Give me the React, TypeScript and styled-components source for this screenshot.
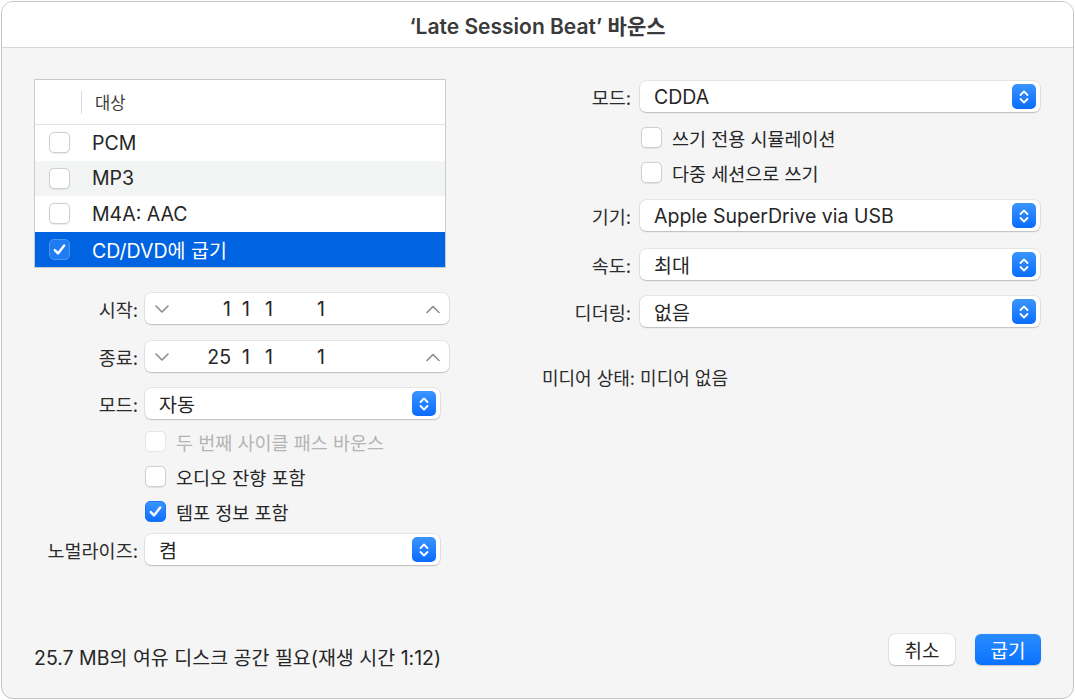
import styled, { createGlobalStyle } from "styled-components";

const GlobalStyle = createGlobalStyle`
  html, body {
    margin: 0;
    padding: 0;
    background: #ffffff;
  }
  body {
    font-family: Inter, "Noto Sans CJK KR", sans-serif;
    color: #262626;
  }
`;

//# 창
const Window = styled.div`
  box-sizing: border-box;
  margin: 1px;
  width: 1073px;
  height: 698px;
  border: 1px solid #c4c4c4;
  border-radius: 12px;
  background: #f5f5f5;
  overflow: hidden;
  display: flex;
  flex-direction: column;
`;

const TitleBar = styled.div`
  height: 45px;
  flex: none;
  background: #ffffff;
  border-bottom: 1px solid #d8d8d8;
  display: flex;
  align-items: center;
  justify-content: center;
  font-size: 21px;
  font-weight: 600;
  color: #3a3a3a;
`;

const Body = styled.div`
  flex: 1;
  display: flex;
  flex-direction: column;
  padding: 31px 32px 27px 32px;
`;

const Columns = styled.div`
  flex: 1;
  display: flex;
  gap: 91px;
`;

const LeftColumn = styled.div`
  width: 416px;
  display: flex;
  flex-direction: column;
`;

const RightColumn = styled.div`
  width: 500px;
  display: flex;
  flex-direction: column;
`;

//# 대상 표
const Table = styled.div`
  width: 410px;
  border: 1px solid #cacaca;
  background: #ffffff;
`;

const TableHeader = styled.div`
  height: 44px;
  display: flex;
  align-items: center;
  border-bottom: 1px solid #e2e2e2;
  font-size: 16.5px;
  color: #3a3a3a;
`;

const HeaderDivider = styled.div`
  width: 1px;
  height: 23px;
  margin-left: 46px;
  margin-right: 13px;
  background: #dcdcdc;
`;

const TableRow = styled.div<{ $selected?: boolean; $alt?: boolean }>`
  height: 35.5px;
  display: flex;
  align-items: center;
  padding-left: 14px;
  gap: 22px;
  font-size: 19.5px;
  background: ${({ $selected, $alt }) =>
    $selected ? "#0063e1" : $alt ? "#f3f4f4" : "#ffffff"};
  color: ${({ $selected }) => ($selected ? "#ffffff" : "#262626")};
`;

//# 체크박스
const Box = styled.div<{ $checked?: boolean; $disabled?: boolean; $onBlue?: boolean }>`
  box-sizing: border-box;
  width: 21px;
  height: 21px;
  flex: none;
  border-radius: 5px;
  display: flex;
  align-items: center;
  justify-content: center;
  background: ${({ $checked, $onBlue }) =>
    $checked
      ? $onBlue
        ? "#1f7cf3"
        : "linear-gradient(#3b95ff, #0a6fff)"
      : "#ffffff"};
  border: 1px solid
    ${({ $checked, $disabled, $onBlue }) =>
      $onBlue
        ? "#4d95f0"
        : $checked
        ? "#1b76f5"
        : $disabled
        ? "#e6e6e6"
        : "#cfcfcf"};
  box-shadow: ${({ $disabled, $checked }) =>
    $disabled || $checked ? "none" : "0 0.5px 1px rgba(0,0,0,0.08)"};
`;

function CheckBox(props: { checked?: boolean; disabled?: boolean; onBlue?: boolean }) {
  return (
    <Box $checked={props.checked} $disabled={props.disabled} $onBlue={props.onBlue}>
      {props.checked && (
        <svg width="15" height="15" viewBox="0 0 16 16">
          <path
            d="M3 8.6 L6.4 12.2 L13 3.8"
            fill="none"
            stroke="#ffffff"
            strokeWidth="2.6"
            strokeLinecap="round"
            strokeLinejoin="round"
          />
        </svg>
      )}
    </Box>
  );
}

const CheckRow = styled.div<{ $disabled?: boolean; $indent: number }>`
  height: 35px;
  display: flex;
  align-items: center;
  gap: 10px;
  padding-left: ${({ $indent }) => $indent}px;
  font-size: 18.5px;
  color: ${({ $disabled }) => ($disabled ? "#b4b4b4" : "#262626")};
`;

//# 폼 행
const FormRow = styled.div<{ $labelWidth: number; $top: number; $gap: number }>`
  display: grid;
  grid-template-columns: ${({ $labelWidth }) => $labelWidth}px 1fr;
  column-gap: ${({ $gap }) => $gap}px;
  align-items: center;
  margin-top: ${({ $top }) => $top}px;
`;

const Label = styled.div`
  text-align: right;
  font-size: 18.5px;
  color: #2b2b2b;
  white-space: nowrap;
`;

const Field = styled.div<{ $width: number }>`
  box-sizing: border-box;
  width: ${({ $width }) => $width}px;
  height: 31px;
  background: #ffffff;
  border-radius: 6px;
  box-shadow: 0 0 0 0.5px rgba(0, 0, 0, 0.12), 0 1px 1.5px rgba(0, 0, 0, 0.18);
  display: flex;
  align-items: center;
  font-size: 19.5px;
  color: #262626;
`;

const PopupText = styled.div`
  flex: 1;
  padding-left: 14px;
`;

const PopupButton = styled.div`
  width: 24px;
  height: 25px;
  margin-right: 4px;
  border-radius: 5px;
  background: linear-gradient(#3b95ff, #0a6cff);
  display: flex;
  align-items: center;
  justify-content: center;
`;

function Popup(props: { width: number; value: string }) {
  return (
    <Field $width={props.width}>
      <PopupText>{props.value}</PopupText>
      <PopupButton>
        <svg width="14" height="18" viewBox="0 0 14 18">
          <path
            d="M3.5 7 L7 3.5 L10.5 7 M3.5 11 L7 14.5 L10.5 11"
            fill="none"
            stroke="#ffffff"
            strokeWidth="1.8"
            strokeLinecap="round"
            strokeLinejoin="round"
          />
        </svg>
      </PopupButton>
    </Field>
  );
}

//# 위치 스테퍼
const Stepper = styled(Field)`
  padding: 0 8px 0 9px;
`;

const Numbers = styled.div`
  flex: 1;
  display: flex;
  padding-left: 28px;
`;

const Num = styled.span<{ $w: number }>`
  width: ${({ $w }) => $w}px;
  text-align: right;
  font-size: 19.5px;
`;

function Chevron(props: { up?: boolean }) {
  return (
    <svg width="16" height="10" viewBox="0 0 16 10">
      <path
        d={props.up ? "M2 8.5 L8 2.5 L14 8.5" : "M2 2 L8 8 L14 2"}
        fill="none"
        stroke="#8c8c8c"
        strokeWidth="1.6"
        strokeLinecap="round"
        strokeLinejoin="round"
      />
    </svg>
  );
}

function Position(props: { bar: string }) {
  return (
    <Stepper $width={304}>
      <Chevron />
      <Numbers>
        <Num $w={33}>{props.bar}</Num>
        <Num $w={19}>1</Num>
        <Num $w={23}>1</Num>
        <Num $w={52}>1</Num>
      </Numbers>
      <Chevron up />
    </Stepper>
  );
}

const StatusText = styled.div`
  margin-top: 37px;
  font-size: 18px;
  color: #2b2b2b;
  padding-left: 1px;
`;

//# 하단
const Footer = styled.div`
  display: flex;
  align-items: center;
  justify-content: space-between;
`;

const FooterText = styled.div`
  font-size: 19.5px;
  color: #262626;
  padding-top: 14px;
`;

const Buttons = styled.div`
  display: flex;
  gap: 20px;
`;

const Button = styled.div<{ $primary?: boolean }>`
  box-sizing: border-box;
  width: 66px;
  height: 31px;
  border-radius: 6px;
  display: flex;
  align-items: center;
  justify-content: center;
  font-size: 19px;
  background: ${({ $primary }) =>
    $primary ? "linear-gradient(#2a8bff, #0a72ff)" : "#ffffff"};
  color: ${({ $primary }) => ($primary ? "#ffffff" : "#262626")};
  box-shadow: ${({ $primary }) =>
    $primary
      ? "0 0.5px 1px rgba(0,0,0,0.2)"
      : "0 0 0 0.5px rgba(0,0,0,0.12), 0 1px 1.5px rgba(0,0,0,0.18)"};
`;

const formats = ["PCM", "MP3", "M4A: AAC", "CD/DVD에 굽기"];

export default function App() {
  return (
    <>
      <GlobalStyle />
      <Window>
        <TitleBar>‘Late Session Beat’ 바운스</TitleBar>
        <Body>
          <Columns>
            <LeftColumn>
              <Table>
                <TableHeader>
                  <HeaderDivider />
                  대상
                </TableHeader>
                {formats.map((f, i) => (
                  <TableRow key={f} $alt={i === 1} $selected={i === 3}>
                    <CheckBox checked={i === 3} onBlue={i === 3} />
                    {f}
                  </TableRow>
                ))}
              </Table>
              <FormRow $labelWidth={104} $gap={7} $top={25}>
                <Label>시작:</Label>
                <Position bar="1" />
              </FormRow>
              <FormRow $labelWidth={104} $gap={7} $top={17}>
                <Label>종료:</Label>
                <Position bar="25" />
              </FormRow>
              <FormRow $labelWidth={104} $gap={7} $top={16}>
                <Label>모드:</Label>
                <Popup width={295} value="자동" />
              </FormRow>
              <CheckRow $indent={111} $disabled style={{ marginTop: 5 }}>
                <CheckBox disabled />
                두 번째 사이클 패스 바운스
              </CheckRow>
              <CheckRow $indent={111}>
                <CheckBox />
                오디오 잔향 포함
              </CheckRow>
              <CheckRow $indent={111}>
                <CheckBox checked />
                템포 정보 포함
              </CheckRow>
              <FormRow $labelWidth={104} $gap={7} $top={5}>
                <Label>노멀라이즈:</Label>
                <Popup width={295} value="켬" />
              </FormRow>
            </LeftColumn>
            <RightColumn>
              <FormRow $labelWidth={90} $gap={9} $top={2}>
                <Label>모드:</Label>
                <Popup width={400} value="CDDA" />
              </FormRow>
              <CheckRow $indent={100} style={{ marginTop: 8 }}>
                <CheckBox />
                쓰기 전용 시뮬레이션
              </CheckRow>
              <CheckRow $indent={100}>
                <CheckBox />
                다중 세션으로 쓰기
              </CheckRow>
              <FormRow $labelWidth={90} $gap={9} $top={10}>
                <Label>기기:</Label>
                <Popup width={400} value="Apple SuperDrive via USB" />
              </FormRow>
              <FormRow $labelWidth={90} $gap={9} $top={18}>
                <Label>속도:</Label>
                <Popup width={400} value="최대" />
              </FormRow>
              <FormRow $labelWidth={90} $gap={9} $top={16}>
                <Label>디더링:</Label>
                <Popup width={400} value="없음" />
              </FormRow>
              <StatusText>미디어 상태: 미디어 없음</StatusText>
            </RightColumn>
          </Columns>
          <Footer>
            <FooterText>25.7 MB의 여유 디스크 공간 필요(재생 시간 1:12)</FooterText>
            <Buttons>
              <Button>취소</Button>
              <Button $primary>굽기</Button>
            </Buttons>
          </Footer>
        </Body>
      </Window>
    </>
  );
}
